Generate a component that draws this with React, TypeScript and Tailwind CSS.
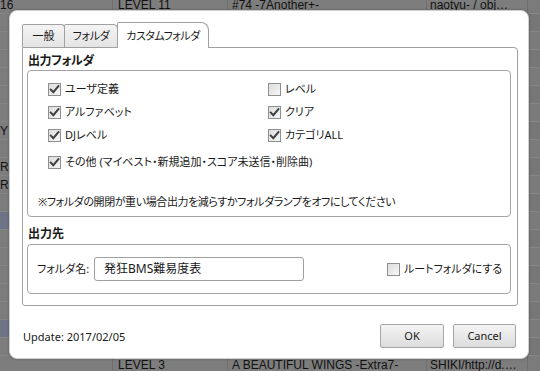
import React from "react";

const bgRows: string[][] = [];
for (let i = 0; i < 21; i++) bgRows.push(["", "", "", ""]);
bgRows[0] = ["16", "LEVEL 11", "#74 -7Another+-", "naotyu- / obj…"];
bgRows[7] = ["Y", "", "", ""];
bgRows[9] = ["RD", "", "", ""];
bgRows[10] = ["RM", "", "", ""];
bgRows[20] = ["", "LEVEL 3", "A BEAUTIFUL WINGS -Extra7-", "SHIKI/http://d.…"];

function Check({ checked }: { checked: boolean }) {
  return (
    <svg width="13" height="13" viewBox="0 0 13 13" className="shrink-0">
      <defs>
        <linearGradient id="cbg" x1="0" y1="0" x2="1" y2="1">
          <stop offset="0" stopColor="#dcdcdc" />
          <stop offset="1" stopColor="#f7f7f7" />
        </linearGradient>
      </defs>
      <rect x="0.5" y="0.5" width="12" height="12" fill="url(#cbg)" stroke="#8e8f8f" />
      {checked && (
        <path d="M2.8 6.6 L5.3 9.2 L10.4 3.2" fill="none" stroke="#3f3f3f" strokeWidth="2" strokeLinecap="square" />
      )}
    </svg>
  );
}

function CheckItem({ label, checked }: { label: string; checked: boolean }) {
  return (
    <div className="flex items-center gap-[4px] h-[23px] whitespace-nowrap">
      <Check checked={checked} />
      <span>{label}</span>
    </div>
  );
}

export default function App() {
  return (
    <div className="relative h-[371px] w-[540px] overflow-hidden bg-[#7d7d7d] font-['Liberation_Sans',sans-serif] text-[12px] text-[#111]">
      {/* table behind the dialog */}
      <div className="flex flex-col mt-[-4px]">
        {bgRows.map((r, i) => (
          <div
            key={i}
            className={
              "flex h-[18px] shrink-0 items-center border-b border-[#868686]" +
              (i === 12 || i === 18 ? " bg-[#6c7486]" : "")
            }
          >
            <div className="w-[113px] h-full flex items-center border-r border-[#6f6f6f]">{r[0]}</div>
            <div className="w-[115px] h-full flex items-center pl-[5px] border-r border-[#6f6f6f]">{r[1]}</div>
            <div className="w-[199px] h-full flex items-center pl-[4px] border-r border-[#6f6f6f]">{r[2]}</div>
            <div className="w-[101px] h-full flex items-center pl-[3px] border-r border-[#6f6f6f]">{r[3]}</div>
            <div className={"flex-1 h-full " + (i % 2 ? "bg-[#777777]" : "bg-[#7b7b7b]")}></div>
          </div>
        ))}
      </div>

      {/* dialog */}
      <div className="absolute left-[9px] top-[10px] w-[520px] h-[349px] rounded-[8px] border border-[#cfcfcf] bg-white shadow-[0_0_3px_rgba(0,0,0,0.25)] pl-[12px] pr-[10px] pt-[12px] flex flex-col font-['Noto_Sans','Noto_Sans_CJK_JP',sans-serif] [font-feature-settings:'palt'] text-[11px] text-[#1a1a1a]">
        {/* tabs */}
        <div className="flex items-end h-[24px] whitespace-nowrap">
          <div className="w-[43px] h-[23px] flex items-center justify-center rounded-tl-[2px] rounded-tr-[4px] border border-b-0 border-[#a0a0a0] bg-gradient-to-b from-[#f4f4f4] to-[#e4e4e4]">
            一般
          </div>
          <div className="-ml-px w-[54px] h-[23px] flex items-center justify-center tracking-[-0.3px] rounded-tl-[2px] rounded-tr-[5px] border border-b-0 border-[#a0a0a0] bg-gradient-to-b from-[#f4f4f4] to-[#e4e4e4]">
            フォルダ
          </div>
          <div className="-ml-px relative z-10 -mb-px w-[92px] h-[26px] flex items-center justify-center pt-px tracking-[-0.5px] rounded-tl-[2px] rounded-tr-[8px] border border-b-0 border-[#a0a0a0] bg-white">
            カスタムフォルダ
          </div>
        </div>

        {/* panel */}
        <div className="h-[259px] border border-[#a0a0a0] rounded-tr-[4px] rounded-b-[3px] flex flex-col pt-[5px] pl-[4px] pr-[6px]">
          <div className="h-[16px] leading-[16px] pl-px font-bold text-[12px] tracking-[-0.4px]">出力フォルダ</div>
          <div className="mt-[1px] h-[147px] border border-[#a5a5a5] rounded-[4px] pl-[20px] pt-[7px] flex flex-col">
            <div className="grid grid-cols-[220px_1fr]">
              <CheckItem label="ユーザ定義" checked />
              <CheckItem label="レベル" checked={false} />
              <CheckItem label="アルファベット" checked />
              <CheckItem label="クリア" checked />
              <CheckItem label="DJレベル" checked />
              <CheckItem label="カテゴリALL" checked />
            </div>
            <div className="mt-[4px]">
              <CheckItem label="その他 (マイベスト・新規追加・スコア未送信・削除曲)" checked />
            </div>
            <div className="mt-[20px] -ml-[10px] h-[16px] leading-[16px] tracking-[-0.4px] whitespace-nowrap">
              ※フォルダの開閉が重い場合出力を減らすかフォルダランプをオフにしてください
            </div>
          </div>

          <div className="mt-[9px] h-[16px] leading-[16px] pl-px font-bold text-[12px]">出力先</div>
          <div className="mt-[2px] h-[50px] border border-[#a5a5a5] rounded-[4px] pl-[9px] flex items-center whitespace-nowrap">
            <span className="w-[57px] shrink-0">フォルダ名:</span>
            <div className="w-[210px] h-[24px] border border-[#a0a0a0] rounded-[3px] flex items-center pl-[9px] text-[12px]">
              発狂BMS難易度表
            </div>
            <div className="ml-[83px] flex items-center gap-[4px]">
              <Check checked={false} />
              <span>ルートフォルダにする</span>
            </div>
          </div>
        </div>

        {/* footer */}
        <div className="mt-[18px] flex items-center justify-between pr-[2px]">
          <span className="pl-px pt-[3px]">Update: 2017/02/05</span>
          <div className="flex gap-[9px]">
            <button className="w-[64px] h-[24px] border border-[#a5a5a5] rounded-[2px] bg-gradient-to-b from-[#f4f4f4] to-[#dcdcdc] text-[#1a1a1a]">
              OK
            </button>
            <button className="w-[63px] h-[24px] border border-[#a5a5a5] rounded-[2px] bg-gradient-to-b from-[#f4f4f4] to-[#dcdcdc] text-[#1a1a1a]">
              Cancel
            </button>
          </div>
        </div>
      </div>
    </div>
  );
}
